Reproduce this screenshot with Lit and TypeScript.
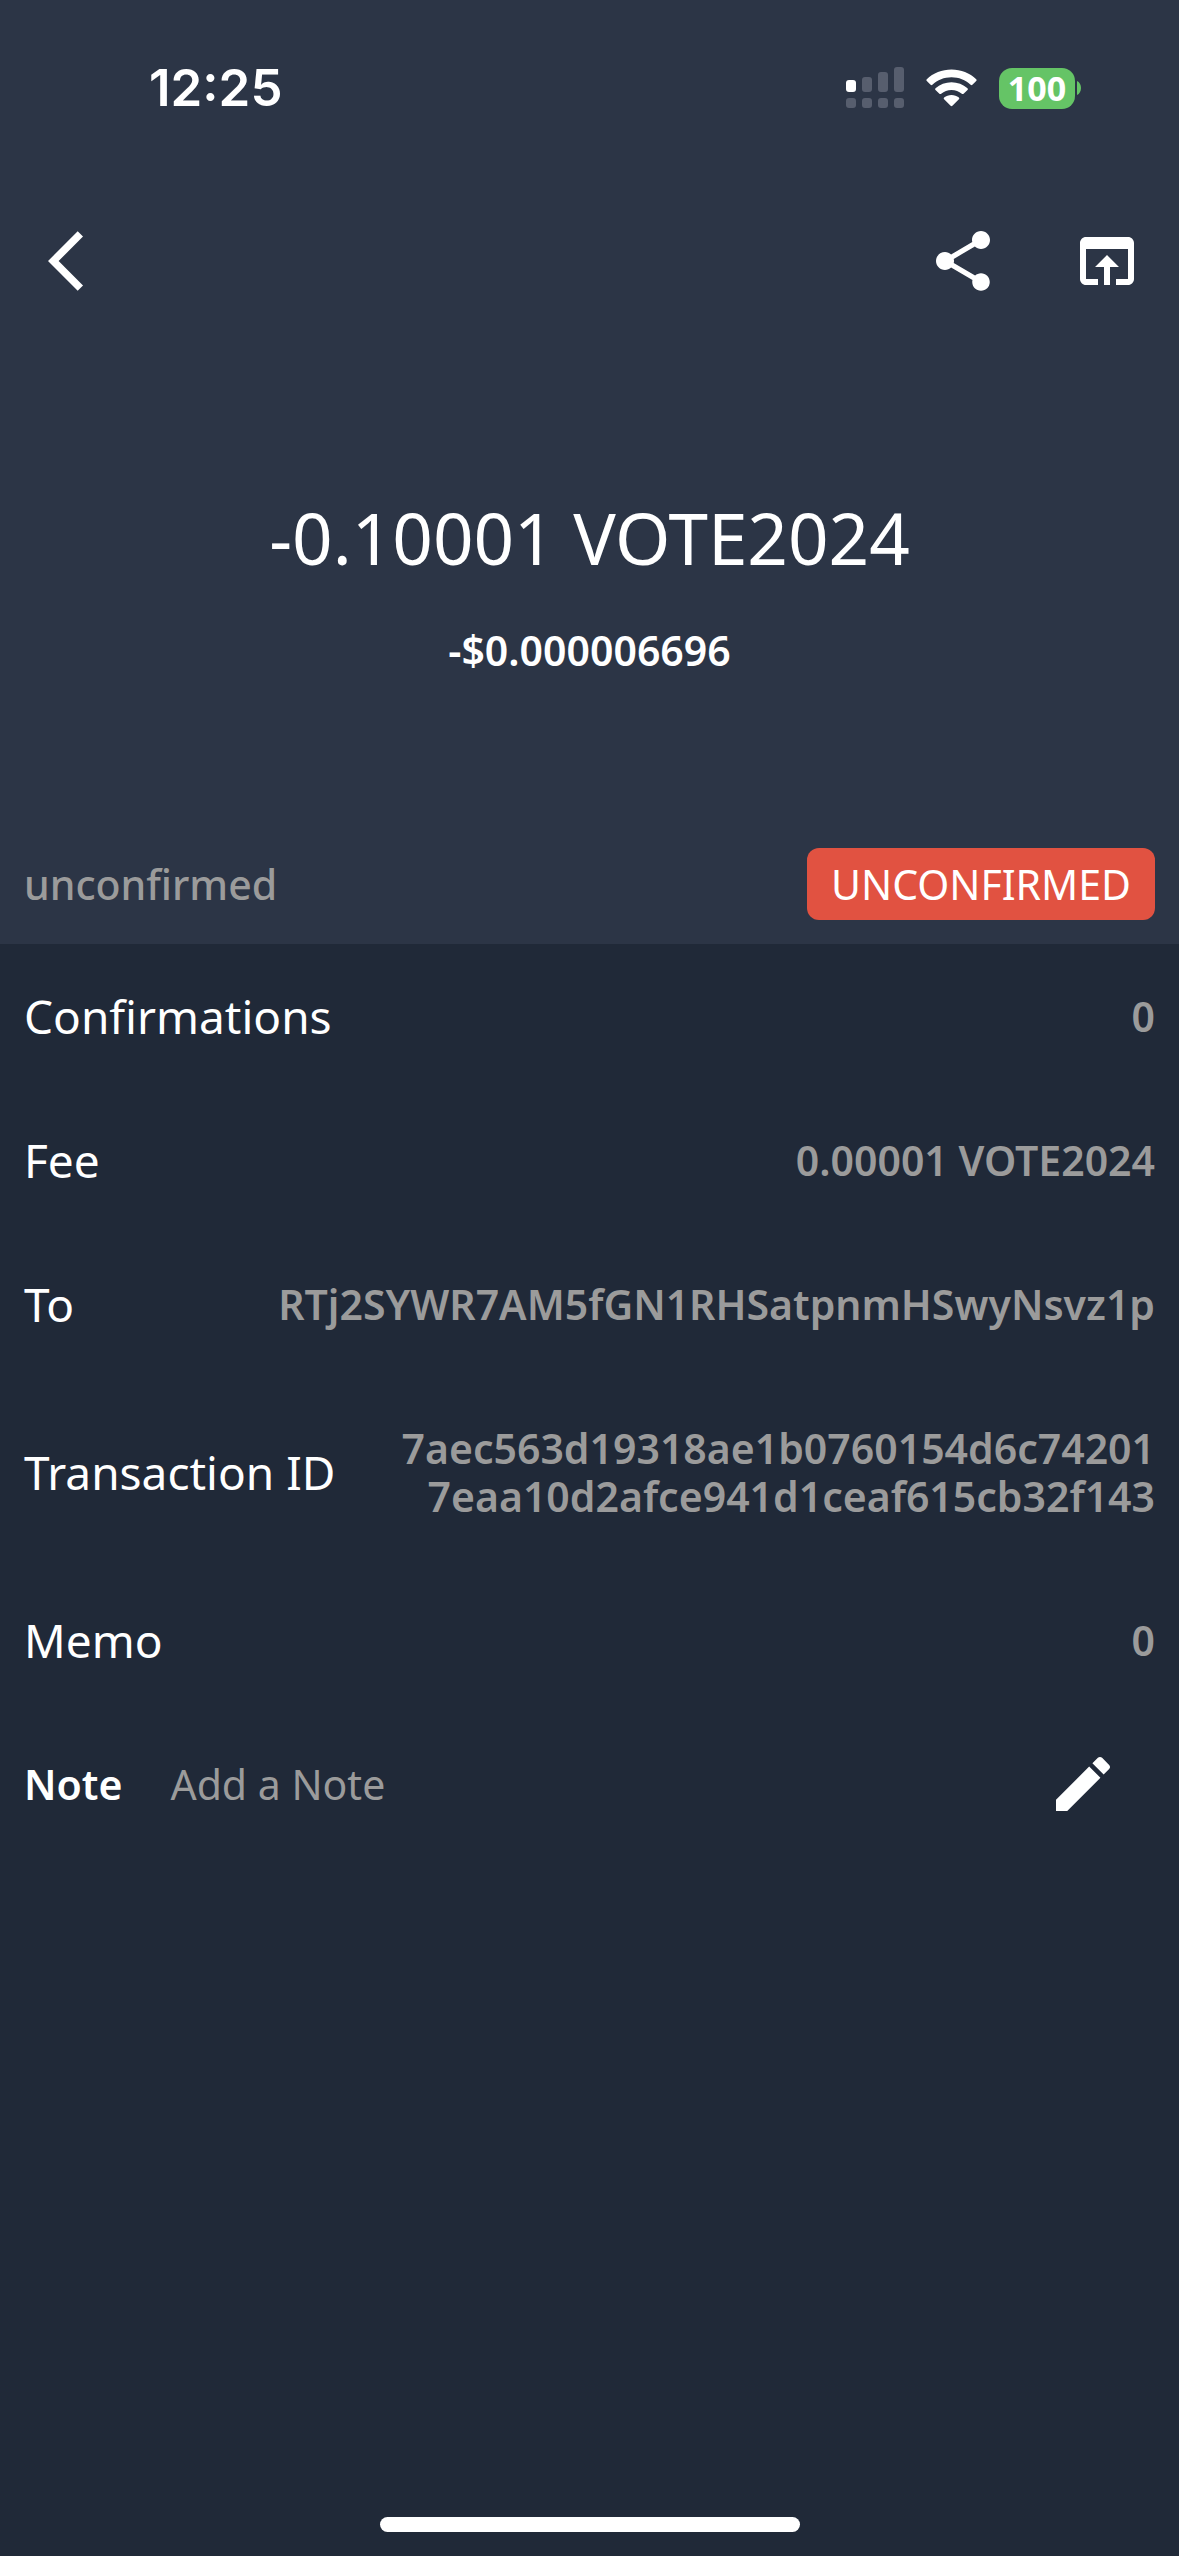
import { LitElement, html, css } from "lit";
import { customElement, property } from "lit/decorators.js";

interface Detail {
  label: string;
  value: string;
}

const DETAILS: Detail[] = [
  { label: "Confirmations", value: "0" },
  { label: "Fee", value: "0.00001 VOTE2024" },
  { label: "To", value: "RTj2SYWR7AM5fGN1RHSatpnmHSwyNsvz1p" },
  {
    label: "Transaction ID",
    value: "7aec563d19318ae1b0760154d6c742017eaa10d2afce941d1ceaf615cb32f143",
  },
  { label: "Memo", value: "0" },
];

const ICONS: Record<string, string> = {
  back: "M11.67 3.87 9.9 2.1 0 12l9.9 9.9 1.77-1.77L3.54 12z",
  share:
    "M18 16.08c-.76 0-1.44.3-1.96.77L8.91 12.7c.05-.23.09-.46.09-.7s-.04-.47-.09-.7l7.05-4.11c.54.5 1.25.81 2.04.81 1.66 0 3-1.34 3-3s-1.34-3-3-3-3 1.34-3 3c0 .24.04.47.09.7L8.04 9.81C7.5 9.31 6.79 9 6 9c-1.66 0-3 1.34-3 3s1.34 3 3 3c.79 0 1.5-.31 2.04-.81l7.12 4.16c-.05.21-.08.43-.08.65 0 1.61 1.31 2.92 2.92 2.92s2.92-1.31 2.92-2.92-1.31-2.92-2.92-2.92z",
  open: "M19 4H5c-1.11 0-2 .9-2 2v12c0 1.1.89 2 2 2h4v-2H5V8h14v10h-4v2h4c1.1 0 2-.9 2-2V6c0-1.1-.89-2-2-2zm-7 6-4 4h3v6h2v-6h3l-4-4z",
  edit: "M3 17.25V21h3.75L17.81 9.94l-3.75-3.75L3 17.25zM20.71 7.04c.39-.39.39-1.02 0-1.41l-2.34-2.34c-.39-.39-1.02-.39-1.41 0l-1.83 1.83 3.75 3.75 1.83-1.83z",
};

@customElement("icon-button")
class IconButton extends LitElement {
  @property() icon = "";
  @property() label = "";

  static styles = css`
    :host {
      display: block;
      flex: none;
    }
    .button {
      display: block;
      padding: 0;
      border: 0;
      background: none;
      color: #fff;
      cursor: pointer;
    }
    .glyph {
      display: block;
      width: 72px;
      height: 72px;
      fill: currentColor;
    }
  `;

  render() {
    return html`<button class="button" type="button" aria-label=${this.label}>
      <svg class="glyph" viewBox="0 0 24 24" aria-hidden="true"><path d=${ICONS[this.icon]}></path></svg>
    </button>`;
  }
}

@customElement("status-bar")
class StatusBar extends LitElement {
  static styles = css`
    :host {
      display: flex;
      align-items: center;
      justify-content: space-between;
      height: 176px;
      padding: 0 98px 0 149px;
      box-sizing: border-box;
      color: #fff;
    }
    .time {
      font-family: Inter, "Liberation Sans", sans-serif;
      font-size: 51px;
      line-height: 60px;
      font-weight: 600;
    }
    .indicators {
      display: flex;
      align-items: center;
    }
    .signal,
    .wifi {
      display: block;
      margin-right: 22px;
    }
    .battery {
      width: 76px;
      height: 41px;
      border-radius: 13px;
      background: #65c466;
      font-family: "Noto Sans", "Open Sans", sans-serif;
      font-size: 34px;
      line-height: 41px;
      font-weight: 700;
      text-align: center;
    }
    .cap {
      display: block;
      margin-left: 2px;
    }
  `;

  render() {
    return html`
      <span class="time">12:25</span>
      <div class="indicators">
        <svg class="signal" width="58" height="42" viewBox="0 0 58 42" fill="#575e6e" aria-hidden="true">
          <rect x="0" y="13" width="10" height="12" rx="3" fill="#fff"></rect>
          <rect x="16" y="10" width="10" height="15" rx="3"></rect>
          <rect x="32" y="5" width="10" height="20" rx="3"></rect>
          <rect x="48" y="0" width="10" height="25" rx="3"></rect>
          <rect x="0" y="31" width="10" height="10" rx="3"></rect>
          <rect x="16" y="31" width="10" height="10" rx="3"></rect>
          <rect x="32" y="31" width="10" height="10" rx="3"></rect>
          <rect x="48" y="31" width="10" height="10" rx="3"></rect>
        </svg>
        <svg class="wifi" width="51" height="38" viewBox="0 0 51 38" fill="#fff" aria-hidden="true">
          <path d="M25.500 0.500C35 0.500 43.800 4 50.200 10.200q.9.900 0 1.800L46.400 15.700q-.9.900-1.800 0C39.500 11 32.800 8.300 25.500 8.300S11.500 11 6.400 15.700q-.9.900-1.800 0L.8 12q-.9-.9 0-1.800C7.200 4 16 .5 25.500.5z"></path>
          <path d="M25.500 13.200c6 0 11.600 2.200 16 6q.9.900 0 1.800l-3.900 3.700q-.9.800-1.800 0C33 22.400 29.400 21 25.500 21s-7.500 1.400-10.300 3.700q-.9.800-1.800 0L9.500 21q-.9-.9 0-1.800c4.400-3.800 10-6 16-6z"></path>
          <path d="M25.500 25.900c2.800 0 5.300.9 7.400 2.500q.9.900 0 1.800l-6.500 6.500q-.9.900-1.800 0l-6.500-6.500q-.9-.9 0-1.800c2.100-1.600 4.600-2.500 7.400-2.500z"></path>
        </svg>
        <div class="battery">100</div>
        <svg class="cap" width="4" height="14" viewBox="0 0 4 14" aria-hidden="true">
          <path d="M0 0c2.500 1 4 3.800 4 7s-1.500 6-4 7z" fill="#65c466"></path>
        </svg>
      </div>
    `;
  }
}

@customElement("app-root")
class AppRoot extends LitElement {
  static styles = css`
    :host {
      display: flex;
      flex-direction: column;
      min-height: 100vh;
      background: #202938;
      color: #fff;
      font-family: "Noto Sans", "Open Sans", sans-serif;
      font-size: 41px;
      line-height: 48px;
    }
    .summary {
      background: #2c3546;
    }
    .toolbar {
      display: flex;
      align-items: center;
      gap: 72px;
      height: 170px;
      padding: 0 36px 0 48px;
    }
    .back {
      margin-right: auto;
    }
    .amounts {
      display: flex;
      flex-direction: column;
      align-items: center;
      gap: 38px;
      padding: 142px 24px 150px;
    }
    .amount {
      margin: 0;
      font-size: 71px;
      line-height: 100px;
      font-weight: 400;
    }
    .fiat {
      margin: 0;
      font-weight: 600;
    }
    .state {
      display: flex;
      align-items: center;
      justify-content: space-between;
      padding: 24px;
    }
    .state-text {
      color: #9b9b9b;
      font-weight: 500;
    }
    .badge {
      padding: 12px 24px;
      border-radius: 12px;
      background: #e15241;
    }
    .details {
      margin: 0;
    }
    .row {
      display: flex;
      align-items: center;
      gap: 54px;
      padding: 48px 24px;
    }
    .label {
      flex: none;
      font-size: 46px;
    }
    .value {
      flex: 1;
      min-width: 0;
      margin: 0;
      color: #9b9b9b;
      font-weight: 600;
      text-align: right;
      overflow-wrap: anywhere;
    }
    .note {
      display: flex;
      align-items: center;
      gap: 48px;
      padding: 36px 60px 36px 24px;
    }
    .note-label {
      font-weight: 600;
    }
    .note-input {
      flex: 1;
      min-width: 0;
      padding: 0;
      border: 0;
      outline: 0;
      background: none;
      color: #fff;
      font: inherit;
    }
    .note-input::placeholder {
      color: #9b9b9b;
      opacity: 1;
    }
    .home {
      width: 420px;
      height: 15px;
      margin: auto auto 24px;
      border-radius: 8px;
      background: #fff;
    }
  `;

  render() {
    return html`
      <header class="summary">
        <status-bar></status-bar>
        <nav class="toolbar">
          <icon-button class="back" icon="back" label="Back"></icon-button>
          <icon-button icon="share" label="Share"></icon-button>
          <icon-button icon="open" label="Open in browser"></icon-button>
        </nav>
        <div class="amounts">
          <h1 class="amount">-0.10001 VOTE2024</h1>
          <p class="fiat">-$0.000006696</p>
        </div>
        <div class="state">
          <span class="state-text">unconfirmed</span>
          <span class="badge">UNCONFIRMED</span>
        </div>
      </header>
      <dl class="details">
        ${DETAILS.map(
          (d) => html`<div class="row">
            <dt class="label">${d.label}</dt>
            <dd class="value">${d.value}</dd>
          </div>`
        )}
      </dl>
      <div class="note">
        <label class="note-label" for="note">Note</label>
        <input class="note-input" id="note" type="text" placeholder="Add a Note" />
        <icon-button icon="edit" label="Edit note"></icon-button>
      </div>
      <div class="home"></div>
    `;
  }
}
